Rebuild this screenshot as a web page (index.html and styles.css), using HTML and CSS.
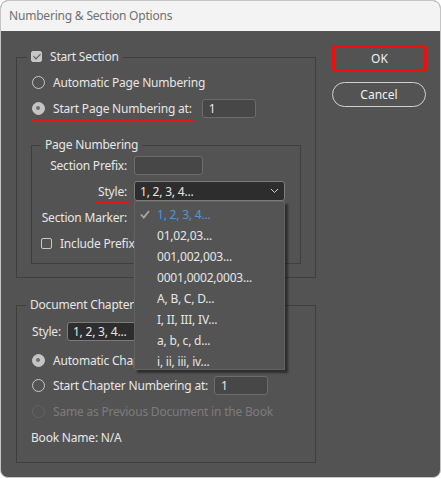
FILE: index.html
```html
<!DOCTYPE html>
<html lang="en">
<head>
  <meta charset="UTF-8" />
  <title>Numbering &amp; Section Options</title>
  <link rel="stylesheet" href="styles.css">
</head>
<body>
  <div class="window">
    <div class="titlebar">Numbering &amp; Section Options</div>
    <div class="content">
      <div class="left">
        <fieldset class="group section">
          <legend><span class="check on"></span>Start Section</legend>
          <div class="row first"><span class="radio"></span>Automatic Page Numbering</div>
          <div class="row">
            <span class="mark"><span class="radio on"></span>Start Page Numbering at:</span>
            <span class="field num wide">1</span>
          </div>

          <fieldset class="group inner">
            <legend>Page Numbering</legend>
            <div class="form">
              <label>Section Prefix:</label>
              <div><span class="field prefix"></span></div>
              <label><span class="mark">Style:</span></label>
              <div class="select-wrap">
                <div class="select">
                  <span>1, 2, 3, 4...</span>
                  <svg width="9" height="6" viewBox="0 0 9 6"><polyline points="1,1 4.5,4.5 8,1" fill="none" stroke="#d0d0d0" stroke-width="1"/></svg>
                </div>
                <ul class="menu">
                  <li class="selected">
                    <svg class="tick" width="10" height="9" viewBox="0 0 10 9"><polyline points="1,4.5 3.8,7.5 9,1" fill="none" stroke="#a8a8a8" stroke-width="1.8"/></svg>
                    1, 2, 3, 4...
                  </li>
                  <li>01,02,03...</li>
                  <li>001,002,003...</li>
                  <li>0001,0002,0003...</li>
                  <li>A, B, C, D...</li>
                  <li>I, II, III, IV...</li>
                  <li>a, b, c, d...</li>
                  <li>i, ii, iii, iv...</li>
                </ul>
              </div>
              <label>Section Marker:</label>
              <div><span class="field marker"></span></div>
            </div>
            <div class="row prefix-row"><span class="check"></span>Include Prefix when Numbering Pages</div>
          </fieldset>
        </fieldset>

        <fieldset class="group chapter">
          <legend>Document Chapter Number</legend>
          <div class="row style-row">
            <span class="lbl">Style:</span>
            <div class="select small"><span>1, 2, 3, 4...</span></div>
          </div>
          <div class="row auto-row"><span class="radio on"></span>Automatic Chapter Numbering</div>
          <div class="row start-row"><span class="radio"></span>Start Chapter Numbering at:<span class="field num">1</span></div>
          <div class="row disabled"><span class="radio"></span>Same as Previous Document in the Book</div>
          <div class="row book">Book Name: N/A</div>
        </fieldset>
      </div>

      <div class="buttons">
        <button class="btn ok">OK</button>
        <button class="btn cancel">Cancel</button>
      </div>
    </div>
  </div>
</body>
</html>
```

FILE: styles.css
```css
* {
  box-sizing: border-box;
}

body {
  margin: 0;
  background: #fff;
  font-family: "Noto Sans", "Segoe UI", sans-serif;
  font-size: 12px;
  letter-spacing: -0.2px;
  color: #e6e6e6;
}

.window {
  width: 441px;
  height: 478px;
  border: 1px solid #c4c4c4;
  border-radius: 8px;
  overflow: hidden;
  background: #535353;
  display: flex;
  flex-direction: column;
}

.titlebar {
  height: 30px;
  line-height: 30px;
  padding-left: 8px;
  background: #f3f3f3;
  color: #707070;
  flex-shrink: 0;
}

.content {
  display: flex;
  padding-left: 15px;
}

.left {
  width: 300px;
}

/* groups */

.group {
  margin: 0;
  padding: 0 0 0 15px;
  border: 1px solid #3f3f3f;
  min-width: 0;
}

.group legend {
  line-height: 16px;
  padding: 0 4px;
  margin-left: -5px;
}

.section {
  margin-top: 18px;
  padding-bottom: 13px;
}

.inner {
  width: 270px;
  margin: 16px 0 0 -1px;
  padding: 0 0 7px 0;
}

.inner legend {
  margin-left: 9px;
}

.chapter {
  margin-top: 19px;
  padding-bottom: 12px;
}

.chapter legend {
  margin-left: -6px;
}

.row {
  display: flex;
  align-items: center;
  height: 26px;
  white-space: nowrap;
}

.section > .row.first {
  margin-top: 4px;
}

/* controls */

.radio {
  display: inline-block;
  width: 13px;
  height: 13px;
  border: 1.5px solid #c9c9c9;
  border-radius: 50%;
  margin-right: 8px;
  flex-shrink: 0;
  position: relative;
}

.radio.on {
  background: #c4c4c4;
  border-color: #c4c4c4;
}

.radio.on::after {
  content: "";
  position: absolute;
  left: 3px;
  top: 3px;
  width: 4px;
  height: 4px;
  border-radius: 50%;
  background: #6e6e6e;
}

.check {
  display: inline-block;
  width: 11px;
  height: 11px;
  border: 1px solid #c9c9c9;
  border-radius: 2px;
  margin-right: 8px;
  vertical-align: -1px;
  flex-shrink: 0;
  position: relative;
}

.check.on {
  background: #c6c6c6;
}

.check.on::after {
  content: "";
  position: absolute;
  left: 3px;
  top: 0px;
  width: 3px;
  height: 6px;
  border: solid #555;
  border-width: 0 1.5px 1.5px 0;
  transform: rotate(45deg);
}

.field {
  display: inline-block;
  height: 19px;
  line-height: 17px;
  padding-left: 6px;
  background: #474747;
  border: 1px solid #6c6c6c;
  border-radius: 3px;
}

.field.num {
  width: 54px;
  margin-left: 6px;
}

.field.num.wide {
  margin-left: 10px;
}

.field.prefix,
.field.marker {
  width: 69px;
  vertical-align: middle;
}

.mark {
  position: relative;
  display: inline-flex;
  align-items: center;
}

.mark::after {
  content: "";
  position: absolute;
  left: 0;
  right: -2px;
  bottom: -5px;
  height: 2px;
  background: #e8141a;
}

/* page numbering form */

.form {
  display: grid;
  grid-template-columns: 95px 1fr;
  grid-auto-rows: 26px;
  column-gap: 7px;
  align-items: center;
  margin-top: -1px;
}

.form label {
  text-align: right;
  white-space: nowrap;
}

.form label .mark::after {
  left: -2px;
  right: -3px;
  bottom: -4px;
}

.select-wrap {
  position: relative;
}

.select {
  display: flex;
  align-items: center;
  justify-content: space-between;
  width: 151px;
  height: 20px;
  padding: 0 5px 0 5px;
  background: #2d2d2d;
  border: 1px solid #7c7c7c;
  border-radius: 3px;
}

.select.small {
  width: 151px;
  height: 19px;
}

.menu {
  position: absolute;
  left: 0;
  top: 20px;
  z-index: 5;
  width: 151px;
  margin: 0;
  padding: 2px 0 0 0;
  height: 169px;
  list-style: none;
  background: #545454;
  border: 1px solid #626262;
  box-shadow: 3px 3px 2px rgba(0, 0, 0, 0.45);
}

.menu li {
  position: relative;
  height: 21px;
  line-height: 21px;
  padding-left: 22px;
  white-space: nowrap;
}

.menu li.selected {
  color: #4f96df;
}

.menu .tick {
  position: absolute;
  left: 5px;
  top: 6px;
}

.prefix-row {
  padding-left: 9px;
}

/* chapter */

.style-row {
  margin-top: 5px;
}

.style-row .lbl {
  margin-right: 6px;
}

.auto-row {
  margin-top: 3px;
}

.start-row {
  height: 25px;
}

.disabled {
  color: #7c7c7c;
}

.disabled .radio {
  border-color: #646464;
}

.book {
  margin-left: -1px;
}

/* buttons */

.buttons {
  display: flex;
  flex-direction: column;
  margin-left: 16px;
  margin-top: 14px;
}

.btn {
  font-family: inherit;
  font-size: 12px;
  color: #f0f0f0;
  background: #535353;
  cursor: pointer;
}

.btn.ok {
  width: 95px;
  height: 27px;
  border: 3px solid #f20d0d;
  border-radius: 4px;
}

.btn.cancel {
  width: 94px;
  height: 25px;
  margin-top: 10px;
  border: 1px solid #d2d2d2;
  border-radius: 13px;
}
```
